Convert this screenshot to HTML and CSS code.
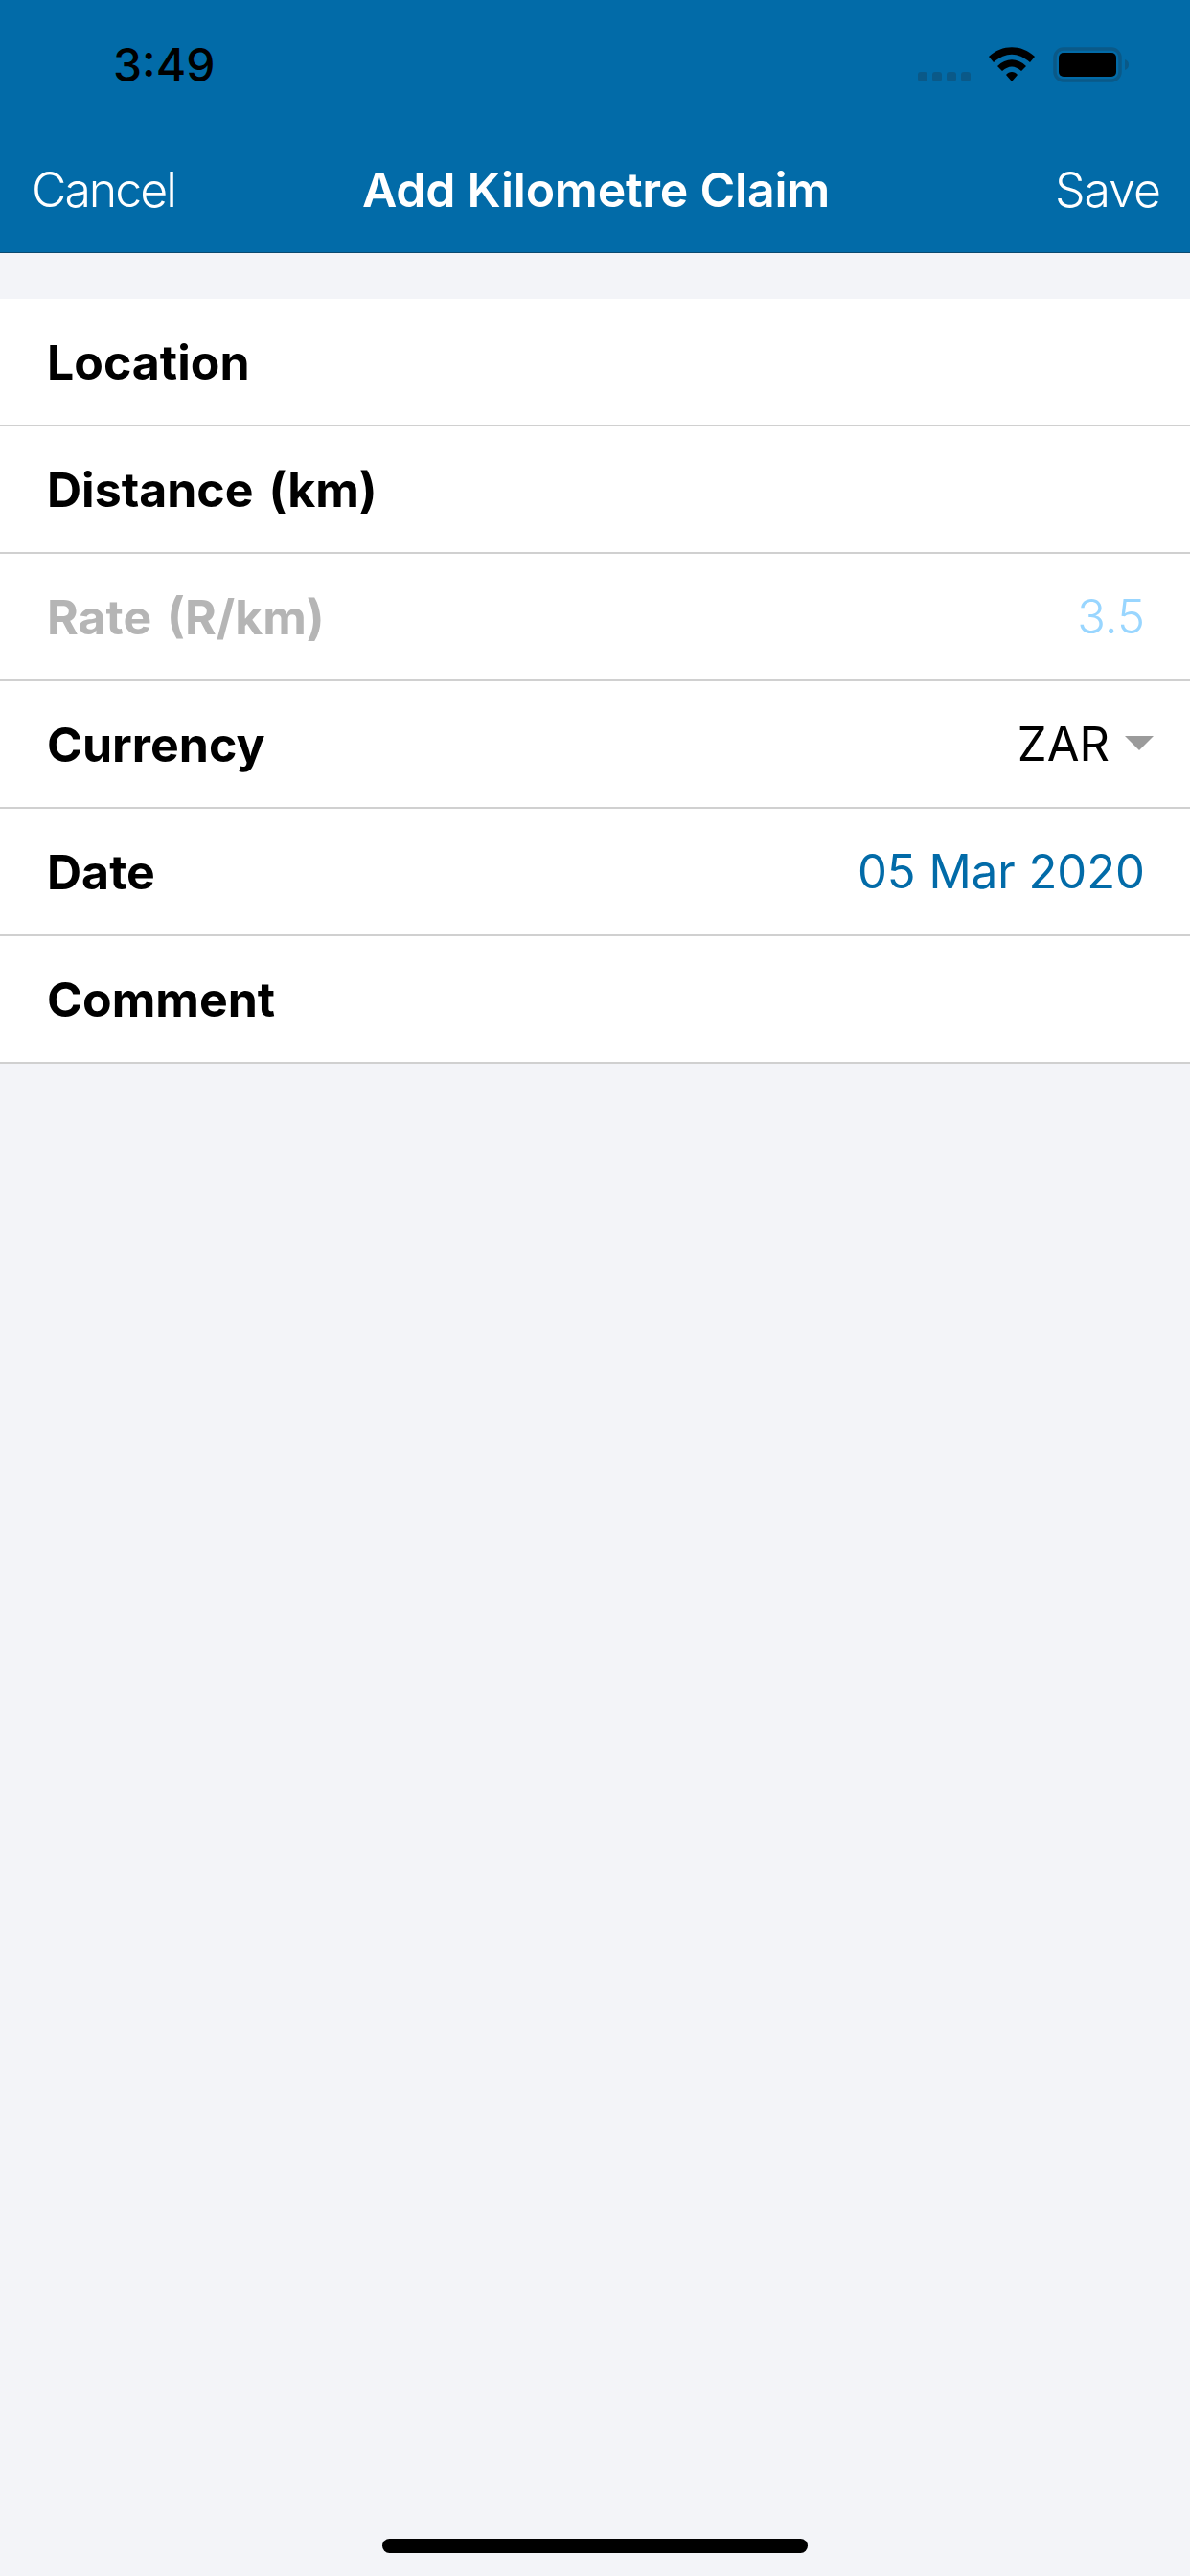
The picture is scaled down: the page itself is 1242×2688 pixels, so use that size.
FILE: index.html
```html
<!DOCTYPE html>
<html>
<head>
  <title>Add Kilometre Claim</title>
  <link rel="stylesheet" href="styles.css">
</head>
<body>
  <div class="header">
    <div class="status-bar">
      <span class="time">3:49</span>
      <div class="status-icons">
        <svg class="signal" width="55" height="11" viewBox="0 0 55 11">
          <rect x="0" y="0" width="10" height="10" rx="3"/>
          <rect x="15" y="0" width="10" height="10" rx="3"/>
          <rect x="30" y="0" width="10" height="10" rx="3"/>
          <rect x="45" y="0" width="10" height="10" rx="3"/>
        </svg>
        <svg class="wifi" width="48" height="36" viewBox="0 0 48 36">
          <path d="M0 10 C14 -3 34 -3 48 10 L43 16 C30 5 18 5 5 16 Z"/>
          <path d="M9 20 C18 11 30 11 39 20 L34 25 C27 19 21 19 14 25 Z"/>
          <path d="M18 29 C21 25 27 25 30 29 L24 36 Z"/>
        </svg>
        <svg class="battery" width="80" height="38" viewBox="0 0 80 38">
          <rect class="battery-case" x="2" y="2" width="68" height="33" rx="9"/>
          <rect x="6" y="6" width="60" height="25" rx="5"/>
          <path class="battery-tip" d="M75 13 C78 14 79 16 79 18.500 C79 21 78 23 75 24 Z"/>
        </svg>
      </div>
    </div>
    <div class="nav-bar">
      <span class="nav-btn cancel">Cancel</span>
      <span class="nav-title">Add Kilometre Claim</span>
      <span class="nav-btn save">Save</span>
    </div>
  </div>

  <div class="form">
    <div class="row"><span class="label">Location</span></div>
    <div class="row"><span class="label">Distance (km)</span></div>
    <div class="row disabled">
      <span class="label">Rate (R/km)</span>
      <span class="value">3.5</span>
    </div>
    <div class="row">
      <span class="label">Currency</span>
      <span class="value picker">ZAR<i class="caret"></i></span>
    </div>
    <div class="row">
      <span class="label">Date</span>
      <span class="value date">05 Mar 2020</span>
    </div>
    <div class="row"><span class="label">Comment</span></div>
  </div>

  <div class="home-bar"></div>
</body>
</html>
```

FILE: styles.css
```css
* {
  margin: 0;
  padding: 0;
  box-sizing: border-box;
}

body {
  font-family: Inter, "Liberation Sans", sans-serif;
  background-color: #f3f4f8;
  width: 1242px;
  height: 2688px;
  display: flex;
  flex-direction: column;
  overflow: hidden;
}

.header {
  background-color: #026ba8;
  height: 264px;
  border-bottom: 1px solid #0b4a70;
  flex-shrink: 0;
}

.status-bar {
  height: 132px;
  display: flex;
  justify-content: space-between;
  padding: 0 63px 0 118px;
}

.time {
  font-size: 48px;
  font-weight: 500;
  line-height: 136px;
  color: #000;
}

.status-icons {
  display: flex;
  align-items: flex-start;
}

.signal {
  fill: #0a5988;
  margin-top: 75px;
  margin-right: 19px;
}

.wifi {
  fill: #000;
  margin-top: 49px;
  margin-right: 19px;
}

.battery {
  margin-top: 49px;
  fill: #000;
}

.battery-case {
  fill: none;
  stroke: #0a5988;
  stroke-width: 3.500;
}

.battery-tip {
  fill: #0a5988;
}

.nav-bar {
  display: flex;
  align-items: center;
  padding: 0 31px 0 33px;
  height: 131px;
  color: #fff;
}

.nav-btn {
  flex: 1;
  font-size: 50px;
  font-weight: 300;
}

.cancel {
  letter-spacing: -2px;
}

.save {
  text-align: right;
  letter-spacing: -1px;
}

.nav-title {
  font-size: 50px;
  font-weight: 600;
  letter-spacing: -0.250px;
}

.form {
  margin-top: 48px;
  background-color: #fff;
}

.row {
  height: 133px;
  border-bottom: 2px solid #d0d0d0;
  display: flex;
  justify-content: space-between;
  align-items: center;
  padding: 0 47px 0 49px;
}

.label {
  font-size: 50px;
  font-weight: 700;
  word-spacing: 4px;
  color: #000;
}

.value {
  font-size: 49px;
  font-weight: 400;
  color: #000;
}

.disabled .label {
  color: #b5b5b5;
}

.disabled .value {
  color: #99d6ff;
  font-weight: 300;
}

.date {
  color: #026ba8;
}

.picker {
  display: flex;
  align-items: center;
  margin-right: -9px;
}

.caret {
  width: 0;
  height: 0;
  border-left: 15px solid transparent;
  border-right: 15px solid transparent;
  border-top: 15px solid #9b9b9b;
  margin-left: 16px;
  margin-top: -2px;
}

.home-bar {
  position: absolute;
  left: 399px;
  top: 2649px;
  width: 444px;
  height: 15px;
  background-color: #000;
  border-radius: 8px;
}
```
